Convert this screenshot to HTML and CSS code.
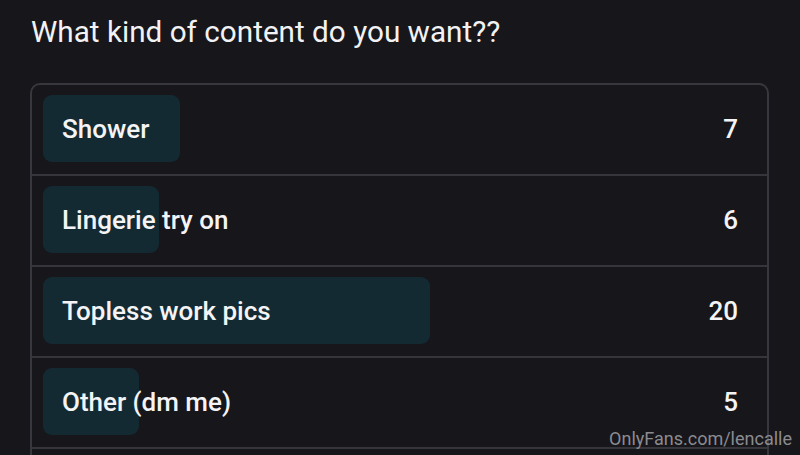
FILE: index.html
```html
<!DOCTYPE html>
<html lang="en">
<head>
<meta charset="utf-8">
<title>Poll</title>
<link rel="stylesheet" href="styles.css">
</head>
<body>
<div class="page">
  <h1 class="question">What kind of content do you want??</h1>
  <div class="poll">
    <div class="option">
      <div class="option-main">
        <div class="bar" style="width:137px"></div>
        <span class="label">Shower</span>
      </div>
      <span class="count">7</span>
    </div>
    <div class="option">
      <div class="option-main">
        <div class="bar" style="width:116px"></div>
        <span class="label">Lingerie try on</span>
      </div>
      <span class="count">6</span>
    </div>
    <div class="option">
      <div class="option-main">
        <div class="bar" style="width:387px"></div>
        <span class="label">Topless work pics</span>
      </div>
      <span class="count">20</span>
    </div>
    <div class="option">
      <div class="option-main">
        <div class="bar" style="width:96px"></div>
        <span class="label">Other (dm me)</span>
      </div>
      <span class="count">5</span>
    </div>
    <div class="option">
      <div class="option-main">
        <div class="bar" style="width:60px"></div>
        <span class="label">&nbsp;</span>
      </div>
      <span class="count"></span>
    </div>
  </div>
</div>
<div class="watermark">OnlyFans.com/lencalle</div>
</body>
</html>
```
FILE: styles.css
```css
html, body {
  margin: 0;
  padding: 0;
  background: #17161b;
  height: 100%;
  overflow: hidden;
}
body {
  font-family: Roboto, "Liberation Sans", Arial, sans-serif;
  color: #f4f4f6;
}
.page {
  padding: 12px 31px 0 30px;
}
.question {
  margin: 0 0 31px 1px;
  font-size: 29.7px;
  font-weight: 400;
  line-height: 40px;
  color: #f2f2f4;
  letter-spacing: 0;
}
.poll {
  border: 2px solid #38373d;
  border-radius: 10px;
}
.option {
  display: flex;
  align-items: center;
  justify-content: space-between;
  padding: 10px 29px 12px 11px;
  border-bottom: 2px solid #36353b;
}
.option-main {
  position: relative;
  flex: 1;
  height: 67px;
  display: flex;
  align-items: center;
}
.bar {
  position: absolute;
  left: 0;
  top: 0;
  bottom: 0;
  background: #142a33;
  border-radius: 9px;
}
.label {
  position: relative;
  padding-left: 19px;
  font-size: 26px;
  font-weight: 500;
  color: #f4f4f6;
}
.count {
  font-size: 26px;
  font-weight: 500;
  color: #f4f4f6;
}
.watermark {
  position: absolute;
  right: 8px;
  bottom: 6px;
  font-family: Roboto, "Liberation Sans", Arial, sans-serif;
  font-size: 18px;
  color: #8b8b90;
}
```
